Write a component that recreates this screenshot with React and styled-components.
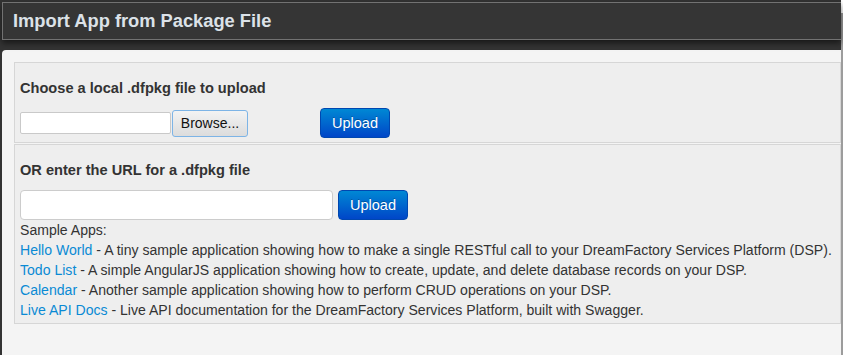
import React from 'react';
import styled, { createGlobalStyle } from 'styled-components';

const GlobalStyle = createGlobalStyle`
  body {
    margin: 0;
    background: #333333;
    font-family: "Liberation Sans", Arial, sans-serif;
    font-size: 14px;
    color: #333333;
  }
`;

const Page = styled.div`
  display: flex;
  width: 843px;
  height: 355px;
  overflow: hidden;
`;

const Main = styled.div`
  display: flex;
  flex-direction: column;
  width: 839px;
  margin-left: 2px;
`;

const Scroll = styled.div`
  width: 2px;
  background: linear-gradient(#ffffff 0, #ffffff 13px, #9c9c9c 13px);
`;

const Header = styled.div`
  display: flex;
  align-items: center;
  height: 35px;
  margin-top: 2px;
  padding: 0 0 1px 10px;
  background: #353535;
  border: 1px solid #727272;
  border-right: none;
  box-shadow: 0 3px 6px rgba(0, 0, 0, 0.55);
  position: relative;
  z-index: 1;
`;

const Title = styled.h1`
  margin: 0;
  font-size: 18.3px;
  font-weight: bold;
  color: #dce2e8;
`;

const Panel = styled.div`
  flex: 1;
  margin-top: 10px;
  padding: 12px 0 0 12px;
  background: #f4f4f4;
  border-top-left-radius: 4px;
`;

const Well = styled.div`
  display: flex;
  flex-direction: column;
  align-items: flex-start;
  padding: ${(p) => p.$pad};
  margin-bottom: 1px;
  background: #eeeeee;
  border: 1px solid #d6d6d6;
`;

const Label = styled.div`
  font-size: 14.6px;
  font-weight: bold;
  line-height: 20px;
  margin-bottom: ${(p) => p.$gap}px;
`;

const Row = styled.div`
  display: flex;
  align-items: center;
`;

const FileBox = styled.div`
  width: 149px;
  height: 20px;
  background: #ffffff;
  border: 1px solid #c9c9c9;
  border-radius: 2px;
`;

const Browse = styled.button`
  width: 76px;
  height: 27px;
  margin-left: 1px;
  padding: 0;
  font-family: inherit;
  font-size: 14px;
  color: #111111;
  background: linear-gradient(#f3f3f3, #dcdcdc);
  border: 1px solid #7db4e6;
  border-radius: 3px;
`;

const UrlBox = styled.div`
  width: 311px;
  height: 28px;
  background: #ffffff;
  border: 1px solid #cccccc;
  border-radius: 4px;
`;

const Upload = styled.button`
  width: 70px;
  height: 30px;
  margin-left: ${(p) => p.$offset}px;
  padding: 0;
  font-family: inherit;
  font-size: 14.5px;
  color: #ffffff;
  text-shadow: 0 -1px 0 rgba(0, 0, 0, 0.25);
  background: linear-gradient(#0088d4, #0046c8);
  border: 1px solid #0047b0;
  border-radius: 4px;
`;

const Line = styled.div`
  font-size: 14.07px;
  line-height: 20px;
  white-space: nowrap;
`;

const Link = styled.a`
  color: #0a8ad4;
  text-decoration: none;
`;

const samples = [
  ['Hello World', 'A tiny sample application showing how to make a single RESTful call to your DreamFactory Services Platform (DSP).'],
  ['Todo List', 'A simple AngularJS application showing how to create, update, and delete database records on your DSP.'],
  ['Calendar', 'Another sample application showing how to perform CRUD operations on your DSP.'],
  ['Live API Docs', 'Live API documentation for the DreamFactory Services Platform, built with Swagger.'],
];

export default function App() {
  return (
    <Page>
      <GlobalStyle />
      <Main>
        <Header>
          <Title>Import App from Package File</Title>
        </Header>
        <Panel>
          <Well $pad="15px 5px 4px 5px">
            <Label $gap={10}>Choose a local .dfpkg file to upload</Label>
            <Row>
              <FileBox />
              <Browse>Browse...</Browse>
              <Upload $offset={72}>Upload</Upload>
            </Row>
          </Well>
          <Well $pad="15px 5px 3px 5px">
            <Label $gap={10}>OR enter the URL for a .dfpkg file</Label>
            <Row>
              <UrlBox />
              <Upload $offset={5}>Upload</Upload>
            </Row>
            <Line>Sample Apps:</Line>
            {samples.map(([name, desc]) => (
              <Line key={name}>
                <Link href="#">{name}</Link> - {desc}
              </Line>
            ))}
          </Well>
        </Panel>
      </Main>
      <Scroll />
    </Page>
  );
}
